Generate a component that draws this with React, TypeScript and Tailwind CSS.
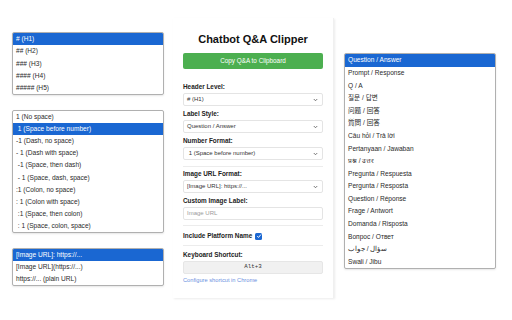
import { ReactNode } from 'react';

const headerOptions = ['# (H1)', '## (H2)', '### (H3)', '#### (H4)', '##### (H5)'];

const numberOptions = [
  '1 (No space)',
  ' 1 (Space before number)',
  '-1 (Dash, no space)',
  '- 1 (Dash with space)',
  ' -1 (Space, then dash)',
  ' - 1 (Space, dash, space)',
  ':1 (Colon, no space)',
  ': 1 (Colon with space)',
  ' :1 (Space, then colon)',
  ' : 1 (Space, colon, space)',
];

const imageOptions = ['[Image URL]: https://...', '[Image URL](https://...)', 'https://... (plain URL)'];

const labelOptions = [
  'Question / Answer',
  'Prompt / Response',
  'Q / A',
  '질문 / 답변',
  '问题 / 回答',
  '質問 / 回答',
  'Câu hỏi / Trả lời',
  'Pertanyaan / Jawaban',
  'प्रश्न / उत्तर',
  'Pregunta / Respuesta',
  'Pergunta / Resposta',
  'Question / Réponse',
  'Frage / Antwort',
  'Domanda / Risposta',
  'Вопрос / Ответ',
  'سؤال / جواب',
  'Swali / Jibu',
];

function OptionList({ items, selected, rowClass }: { items: string[]; selected: number; rowClass: string }) {
  return (
    <div className="w-[152px] border border-[#b0b0b0] rounded-[2px] bg-white overflow-hidden shadow-[0_1px_2px_rgba(0,0,0,0.1)]">
      {items.map((item, i) => (
        <div
          key={i}
          className={`${rowClass} flex items-center px-[3px] whitespace-pre text-[6.6px] ${
            i === selected ? 'bg-[#1a67d2] text-white' : 'text-[#2a2a2a]'
          }`}
        >
          {item}
        </div>
      ))}
    </div>
  );
}

function Label({ children }: { children: ReactNode }) {
  return <div className="h-[10px] leading-[10px] text-[6.4px] font-bold text-[#222]">{children}</div>;
}

function Select({ value }: { value: string }) {
  return (
    <div className="mt-[1px] h-[13px] border border-[#e4e4e4] rounded-[2px] bg-white flex items-center justify-between pl-[3px] pr-[4px]">
      <span className="whitespace-pre text-[6px] text-[#333]">{value}</span>
      <svg width="5" height="4" viewBox="0 0 10 8" className="text-[#555]">
        <path d="M1.5 2 L5 5.5 L8.5 2" fill="none" stroke="currentColor" strokeWidth="1.6" />
      </svg>
    </div>
  );
}

function Divider() {
  return <div className="border-t border-[#ececec]" />;
}

export default function App() {
  return (
    <div
      className="w-[512px] h-[320px] bg-white flex items-start overflow-hidden"
      style={{ fontFamily: '"Liberation Sans", Arial, "Noto Sans CJK KR", "Noto Sans CJK SC", sans-serif' }}
    >
      <div className="ml-[12px] mt-[32px] flex flex-col gap-[15px]">
        <OptionList items={headerOptions} selected={0} rowClass="h-[12.2px]" />
        <OptionList items={numberOptions} selected={1} rowClass="h-[12.1px]" />
        <OptionList items={imageOptions} selected={0} rowClass="h-[12.1px]" />
      </div>

      <div className="ml-[9px] mt-[18px] w-[161px] h-[280px] bg-white shadow-[1px_1px_2px_rgba(0,0,0,0.08)] border-r border-[#f0f0f0] px-[10px] pt-[12px]">
        <div className="h-[18px] leading-[18px] text-center text-[11px] font-bold text-[#111]">Chatbot Q&amp;A Clipper</div>
        <div className="mt-[5px] h-[16px] rounded-[2px] bg-[#4caf50] flex items-center justify-center text-white text-[6.35px]">
          Copy Q&amp;A to Clipboard
        </div>

        <div className="mt-[13px]">
          <Label>Header Level:</Label>
          <Select value="# (H1)" />
        </div>
        <div className="mt-[3px]">
          <Label>Label Style:</Label>
          <Select value="Question / Answer" />
        </div>
        <div className="mt-[3px]">
          <Label>Number Format:</Label>
          <Select value=" 1 (Space before number)" />
        </div>

        <div className="mt-[6px]">
          <Divider />
        </div>

        <div className="mt-[2px]">
          <Label>Image URL Format:</Label>
          <Select value="[Image URL]: https://..." />
        </div>
        <div className="mt-[3px]">
          <Label>Custom Image Label:</Label>
          <div className="mt-[1px] h-[13px] border border-[#e4e4e4] rounded-[2px] bg-white flex items-center pl-[3px] text-[6px] text-[#9a9a9a]">
            Image URL
          </div>
        </div>

        <div className="mt-[5px]">
          <Divider />
        </div>
        <div className="mt-[5px] h-[10px] flex items-center gap-[3px]">
          <span className="text-[6.4px] font-bold text-[#222]">Include Platform Name</span>
          <span className="w-[7px] h-[7px] rounded-[1.5px] bg-[#1a67d2] flex items-center justify-center">
            <svg width="6" height="6" viewBox="0 0 10 10">
              <path d="M2 5.2 L4.2 7.4 L8.2 2.6" fill="none" stroke="white" strokeWidth="1.6" />
            </svg>
          </span>
        </div>
        <div className="mt-[4px]">
          <Divider />
        </div>

        <div className="mt-[4px]">
          <Label>Keyboard Shortcut:</Label>
          <div
            className="mt-[1px] h-[13px] rounded-[2px] bg-[#f1f1f1] border border-[#e6e6e6] flex items-center justify-center text-[5.8px] text-[#333]"
            style={{ fontFamily: '"Liberation Mono", monospace' }}
          >
            Alt+3
          </div>
        </div>
        <div className="mt-[1px] h-[10px] leading-[10px] text-[5.7px] text-[#6b8fe0]">Configure shortcut in Chrome</div>
      </div>

      <div className="ml-[10px] mt-[53px]">
        <OptionList items={labelOptions} selected={0} rowClass="h-[12.6px]" />
      </div>
    </div>
  );
}
